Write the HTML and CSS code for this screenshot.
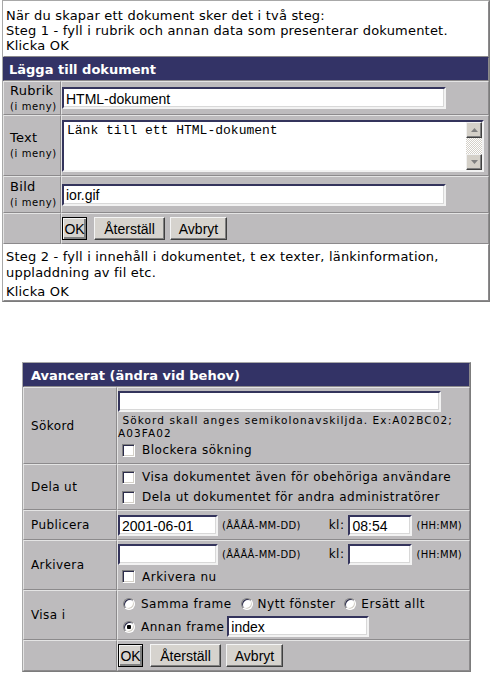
FILE: index.html
```html
<!DOCTYPE html>
<html lang="sv">
<head>
<meta charset="utf-8">
<title>Lägga till dokument</title>
<link rel="stylesheet" href="styles.css">
</head>
<body>
<table class="grid main">
  <tr>
    <td colspan="2" class="info info-top">När du skapar ett dokument sker det i två steg:<br>Steg 1 - fyll i rubrik och annan data som presenterar dokumentet.<br>Klicka OK</td>
  </tr>
  <tr>
    <th colspan="2" class="head head-top">Lägga till dokument</th>
  </tr>
  <tr class="row-rubrik">
    <td class="lbl">Rubrik<br><span class="sub">(i meny)</span></td>
    <td class="fld"><input class="txt w-rubrik" type="text" value="HTML-dokument"></td>
  </tr>
  <tr class="row-text">
    <td class="lbl">Text<br><span class="sub">(i meny)</span></td>
    <td class="fld">
      <div class="ta">
        <textarea class="ta-text">Länk till ett HTML-dokument</textarea>
        <div class="sb">
          <span class="sb-btn"><svg width="7" height="4" viewBox="0 0 7 4"><path d="M3.5 0 L7 4 L0 4 Z" fill="#808080"/></svg></span>
          <span class="sb-track"></span>
          <span class="sb-btn"><svg width="7" height="4" viewBox="0 0 7 4"><path d="M0 0 L7 0 L3.5 4 Z" fill="#808080"/></svg></span>
        </div>
      </div>
    </td>
  </tr>
  <tr class="row-bild">
    <td class="lbl">Bild<br><span class="sub">(i meny)</span></td>
    <td class="fld"><input class="txt w-rubrik" type="text" value="ior.gif"></td>
  </tr>
  <tr class="row-btn">
    <td class="lbl"></td>
    <td class="fld">
      <div class="btns">
        <button class="btn btn-ok" type="button">OK</button>
        <button class="btn btn-reset" type="button">Återställ</button>
        <button class="btn btn-cancel" type="button">Avbryt</button>
      </div>
    </td>
  </tr>
  <tr>
    <td colspan="2" class="info info-bottom">Steg 2 - fyll i innehåll i dokumentet, t ex texter, länkinformation,<br>uppladdning av fil etc.<div class="klicka">Klicka OK</div></td>
  </tr>
</table>

<table class="grid adv">
  <tr>
    <th colspan="2" class="head head-adv">Avancerat (ändra vid behov)</th>
  </tr>
  <tr class="row-sok">
    <td class="lbl2">Sökord</td>
    <td class="fld2">
      <input class="txt w-sok" type="text" value="">
      <div class="hint">&nbsp;Sökord skall anges semikolonavskiljda. Ex:A02BC02;<br>A03FA02</div>
      <label class="opt"><input class="cb" type="checkbox">Blockera sökning</label>
    </td>
  </tr>
  <tr class="row-dela">
    <td class="lbl2">Dela ut</td>
    <td class="fld2">
      <label class="opt"><input class="cb" type="checkbox">Visa dokumentet även för obehöriga användare</label>
      <label class="opt"><input class="cb" type="checkbox">Dela ut dokumentet för andra administratörer</label>
    </td>
  </tr>
  <tr class="row-pub">
    <td class="lbl2">Publicera</td>
    <td class="fld2">
      <div class="dt">
        <input class="txt w-date" type="text" value="2001-06-01">
        <span class="fmt fmt-date">(ÅÅÅÅ-MM-DD)</span>
        <span class="kl">kl:</span>
        <input class="txt w-time" type="text" value="08:54">
        <span class="fmt fmt-time">(HH:MM)</span>
      </div>
    </td>
  </tr>
  <tr class="row-ark">
    <td class="lbl2">Arkivera</td>
    <td class="fld2">
      <div class="dt">
        <input class="txt w-date" type="text" value="">
        <span class="fmt fmt-date">(ÅÅÅÅ-MM-DD)</span>
        <span class="kl">kl:</span>
        <input class="txt w-time" type="text" value="">
        <span class="fmt fmt-time">(HH:MM)</span>
      </div>
      <label class="opt opt-ark"><input class="cb" type="checkbox">Arkivera nu</label>
    </td>
  </tr>
  <tr class="row-visa">
    <td class="lbl2">Visa i</td>
    <td class="fld2">
      <div class="radios">
        <label class="opt"><input class="rb" type="radio" name="frame">Samma frame</label>
        <label class="opt opt-next"><input class="rb" type="radio" name="frame">Nytt fönster</label>
        <label class="opt opt-next"><input class="rb" type="radio" name="frame">Ersätt allt</label>
      </div>
      <div class="radios">
        <label class="opt"><input class="rb" type="radio" name="frame" checked>Annan frame</label>
        <input class="txt w-frame" type="text" value="index">
      </div>
    </td>
  </tr>
  <tr class="row-btn2">
    <td class="lbl2"></td>
    <td class="fld2">
      <div class="btns">
        <button class="btn btn-ok" type="button">OK</button>
        <button class="btn btn-reset" type="button">Återställ</button>
        <button class="btn btn-cancel" type="button">Avbryt</button>
      </div>
    </td>
  </tr>
</table>
</body>
</html>
```

FILE: styles.css
```css
* { box-sizing: border-box; }

body {
  margin: 0;
  padding: 0 0 0 2px;
  background: #fff;
  color: #000;
  font-family: "DejaVu Sans", Verdana, sans-serif;
  font-size: 12px;
}

.grid {
  border-collapse: separate;
  border-spacing: 0;
  border: 1px solid;
  border-color: #a8a8a8 #7c7c7c #7c7c7c #a8a8a8;
}

.grid td, .grid th {
  border: 1px solid;
  border-color: #e4e4e4 #8c8a8c #8c8a8c #e4e4e4;
}

.main { width: 488px; }

.grid .info {
  background: #fff;
  font-size: 13px;
  letter-spacing: 0.2px;
  line-height: 15px;
  padding: 1px 2px 0 2px;
  vertical-align: middle;
  border-color: #fff #8c8a8c #8c8a8c #fff;
}
.grid .info-top { height: 56px; padding-top: 2px; }
.grid .info-bottom { height: 57px; line-height: 16px; padding-top: 4px; vertical-align: top; }
.klicka { margin-top: 3px; }

.grid .head {
  background: #333366;
  color: #fff;
  text-align: left;
  font-weight: bold;
  font-size: 13px;
  border-color: #333366 #8c8a8c #8c8a8c #333366;
}
.grid .head-top { height: 24px; padding: 0 0 0 5px; }
.grid .head-adv { height: 24px; padding: 0 0 0 7px; }

.lbl, .fld, .lbl2, .fld2 { background: #bdbbbd; vertical-align: middle; }

.lbl {
  width: 58px;
  padding: 0 1px 0 6px;
  font-size: 13px;
  letter-spacing: 0.3px;
  line-height: 15px;
}
.sub { font-size: 10px; letter-spacing: 0.6px; }

.fld { padding: 0; }

.row-rubrik td { height: 34px; }
.row-text td { height: 61px; }
.row-bild td { height: 37px; }
.row-btn td { height: 31px; }

.txt {
  display: block;
  margin: 0;
  height: 22px;
  padding: 1px 2px 0;
  background: #fff;
  border: 2px solid;
  border-color: #34345c #f2f2f2 #f2f2f2 #34345c;
  box-shadow: inset -1px -1px 0 #d8d8d8;
  font-family: "Liberation Sans", Arial, sans-serif;
  font-size: 14px;
  letter-spacing: 0;
  color: #000;
  outline: none;
}
.w-rubrik { width: 384px; }

.ta {
  display: flex;
  width: 422px;
  height: 52px;
  border: 2px solid;
  border-color: #34345c #f2f2f2 #f2f2f2 #34345c;
  background: #fff;
}
.ta-text {
  flex: 1;
  margin: 0;
  padding: 1px 3px;
  border: 0;
  resize: none;
  overflow: hidden;
  outline: none;
  background: #fff;
  font-family: "Liberation Mono", "Courier New", monospace;
  font-size: 13px;
  line-height: 15px;
  color: #000;
}
.sb {
  display: flex;
  flex-direction: column;
  width: 16px;
}
.sb-btn {
  display: flex;
  align-items: center;
  justify-content: center;
  height: 16px;
  background: #d4d0c8;
  border: 1px solid;
  border-color: #f0f0f0 #404040 #404040 #f0f0f0;
  box-shadow: inset -1px -1px 0 #808080;
}
.sb-track {
  flex: 1;
  background: repeating-conic-gradient(#d4d0c8 0 25%, #ffffff 0 50%) 0 0 / 2px 2px;
}

.btns { display: flex; gap: 5px; align-items: center; }
.btn {
  height: 23px;
  margin: 0;
  padding: 0;
  background: #d6d3ce;
  border: 1px solid;
  border-color: #f4f4f4 #404040 #404040 #f4f4f4;
  box-shadow: inset -1px -1px 0 #808080;
  font-family: "Liberation Sans", Arial, sans-serif;
  font-size: 14px;
  letter-spacing: 0;
  color: #000;
}
.btn-ok {
  width: 25px;
  border: 1px solid #000;
  box-shadow: inset 1px 1px 0 #f4f4f4, inset -2px -2px 0 #808080;
}
.btn-reset { width: 71px; margin-left: 2px; }
.btn-cancel { width: 57px; }

/* Advanced table */
.adv { width: 449px; margin: 60px 0 0 20px; }

.lbl2 {
  width: 94px;
  padding: 0 0 0 7px;
  font-size: 12px;
  letter-spacing: 0.4px;
}
.fld2 { padding: 0; }

.row-sok td { height: 77px; }
.row-dela td { height: 46px; }
.row-pub td { height: 30px; }
.row-ark td { height: 50px; }
.row-visa td { height: 50px; }
.row-btn2 td { height: 31px; }

.w-sok { width: 323px; height: 21px; }

.hint {
  font-size: 10.5px;
  line-height: 13px;
  margin-top: 2px;
  letter-spacing: 1.1px;
}

.opt {
  display: flex;
  align-items: center;
  height: 20px;
  font-size: 12px;
  letter-spacing: 0.5px;
  white-space: nowrap;
}

.cb, .rb {
  appearance: none;
  -webkit-appearance: none;
  flex: none;
  width: 13px;
  height: 13px;
  margin: 0 7px 0 4px;
  background: #fff;
  border: 1px solid;
  border-color: #808080 #ffffff #ffffff #808080;
  box-shadow: inset 1px 1px 0 #2c2c4c, inset -1px -1px 0 #d4d0c8;
}
.rb { width: 12px; height: 12px; margin: 0 6px 0 5px; border-radius: 50%; }
.rb:checked {
  background: radial-gradient(circle, #000 0 2px, #fff 2.5px);
}

.dt { display: flex; align-items: center; }
.w-date { width: 100px; height: 21px; }
.w-time { width: 64px; height: 21px; }
.fmt { font-size: 10px; letter-spacing: 0.3px; }
.fmt-date { margin-left: 4px; }
.fmt-time { margin-left: 4px; }
.kl { margin: 0 4px 0 28px; letter-spacing: 0.5px; }

.opt-ark { margin-top: 2px; }

.radios { display: flex; align-items: center; height: 23px; }
.radios .opt-next .rb { margin-left: 9px; margin-right: 5px; }
.w-frame { width: 142px; height: 21px; margin-left: 3px; }
```
